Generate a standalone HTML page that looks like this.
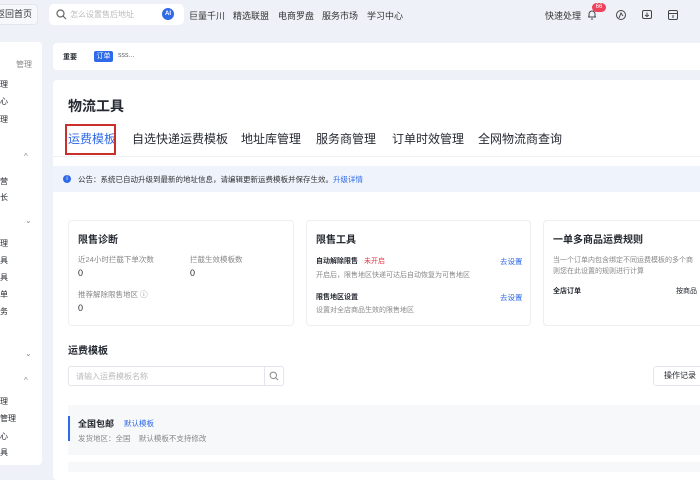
<!DOCTYPE html>
<html><head><meta charset="utf-8">
<style>
*{margin:0;padding:0;box-sizing:border-box}
body{width:700px;height:470px;overflow:hidden;background:#eef1f7;font-family:"Liberation Sans","Noto Sans CJK SC",sans-serif;color:#252931;position:relative}
.a{position:absolute;white-space:nowrap}
.s8{font-size:8px}.s9{font-size:9px}.s10{font-size:10px}
.g{color:#888}
.blue{color:#2f6ae8}
.card{position:absolute;background:#fff;border:1px solid #eceef2;border-radius:4px}
</style></head><body>
<div class="a" style="left:-9px;top:4px;width:47px;height:21px;background:#f7f8fb;border:1px solid #e3e6ec;border-radius:4px;font-size:9px;line-height:19px;padding-left:4px;color:#333">返回首页</div>
<div class="a" style="left:49px;top:4px;width:135px;height:21px;background:#fff;border-radius:5px"></div>
<svg class="a" style="left:56px;top:9px" width="11" height="11" viewBox="0 0 11 11"><circle cx="4.5" cy="4.5" r="3.5" fill="none" stroke="#666" stroke-width="1.2"/><path d="M7 7l3 3" stroke="#666" stroke-width="1.2"/></svg>
<div class="a s8" style="left:70px;top:9px;color:#bbb">怎么设置售后地址</div>
<div class="a" style="left:162px;top:8px;width:12px;height:12px;border-radius:50%;background:#2f6ae8;color:#fff;font-size:6px;line-height:12px;text-align:center;font-weight:bold">AI</div>
<div class="a s9" style="left:189px;top:9px;color:#333">巨量千川</div>
<div class="a s9" style="left:233px;top:9px;color:#333">精选联盟</div>
<div class="a s9" style="left:278px;top:9px;color:#333">电商罗盘</div>
<div class="a s9" style="left:322px;top:9px;color:#333">服务市场</div>
<div class="a s9" style="left:367px;top:9px;color:#333">学习中心</div>
<div class="a s9" style="left:545px;top:9px;color:#333">快速处理</div>
<svg class="a" style="left:586px;top:8px" width="12" height="12" viewBox="0 0 12 12"><path d="M3 9V6a3 3 0 016 0v3M2 9h8M5 11h2" fill="none" stroke="#444" stroke-width="1"/></svg>
<div class="a" style="left:592px;top:3px;width:14px;height:9px;border-radius:5px;background:#f0415a;color:#fff;font-size:6px;line-height:9px;text-align:center">66</div>
<svg class="a" style="left:615px;top:9px" width="12" height="12" viewBox="0 0 12 12"><circle cx="6" cy="6" r="4.5" fill="none" stroke="#444"/><path d="M4 9l2-5 2 3" fill="none" stroke="#444"/></svg>
<svg class="a" style="left:641px;top:9px" width="12" height="12" viewBox="0 0 12 12"><rect x="1.5" y="1.5" width="9" height="8" rx="1.5" fill="none" stroke="#444"/><path d="M6 3.5v4M4 6l2 1.5L8 6" fill="none" stroke="#444"/></svg>
<svg class="a" style="left:667px;top:9px" width="12" height="12" viewBox="0 0 12 12"><rect x="1.5" y="1.5" width="9" height="9" rx="1.5" fill="none" stroke="#444"/><path d="M1.5 4.5h9M6 6v3" fill="none" stroke="#444"/></svg>
<div class="a" style="left:0;top:42px;width:42px;height:423px;background:#fff;border-radius:0 4px 4px 0"></div>
<div class="a s8 g" style="left:16px;top:59px">管理</div>
<div class="a s8" style="left:0;top:79px">理</div>
<div class="a s8" style="left:0;top:96px">心</div>
<div class="a s8" style="left:0;top:114px">理</div>
<div class="a s8 g" style="left:24px;top:152px">^</div>
<div class="a s8" style="left:0;top:176px">营</div>
<div class="a s8" style="left:0;top:192px">长</div>
<div class="a s8 g" style="left:25px;top:216px">⌄</div>
<div class="a s8" style="left:0;top:238px">理</div>
<div class="a s8" style="left:0;top:255px">具</div>
<div class="a s8" style="left:0;top:272px">具</div>
<div class="a s8" style="left:0;top:289px">单</div>
<div class="a s8" style="left:0;top:306px">务</div>
<div class="a s8 g" style="left:25px;top:349px">⌄</div>
<div class="a s8 g" style="left:24px;top:376px">^</div>
<div class="a s8" style="left:0;top:396px">理</div>
<div class="a s8" style="left:0;top:413px">管理</div>
<div class="a s8" style="left:0;top:431px">心</div>
<div class="a s8" style="left:0;top:447px">具</div>
<div class="a" style="left:53px;top:43px;width:660px;height:27px;background:#fff;border-radius:4px"></div>
<div class="a" style="left:63px;top:52px;font-size:7px;font-weight:bold">重要</div>
<div class="a" style="left:94px;top:51px;width:19px;height:11px;background:#2f6ae8;color:#fff;font-size:7px;line-height:11px;text-align:center;border-radius:2px">订单</div>
<div class="a" style="left:118px;top:52px;font-size:7px;color:#666">sss...</div>
<div class="a" style="left:53px;top:80px;width:660px;height:400px;background:#fff;border-radius:4px"></div>
<div class="a" style="left:68px;top:96px;font-size:14px;font-weight:bold">物流工具</div>
<div class="a" style="left:68px;top:130px;font-size:12px;color:#2f6ae8">运费模板</div>
<div class="a" style="left:65px;top:124px;width:51px;height:31px;border:2px solid #c9302c"></div>
<div class="a" style="left:132px;top:130px;font-size:12px">自选快递运费模板</div>
<div class="a" style="left:241px;top:130px;font-size:12px">地址库管理</div>
<div class="a" style="left:316px;top:130px;font-size:12px">服务商管理</div>
<div class="a" style="left:392px;top:130px;font-size:12px">订单时效管理</div>
<div class="a" style="left:478px;top:130px;font-size:12px">全网物流商查询</div>
<div class="a" style="left:53px;top:156px;width:660px;height:1px;background:#eef0f4"></div>
<div class="a" style="left:53px;top:166px;width:660px;height:26px;background:#eef3fc"></div>
<div class="a" style="left:63px;top:175px;width:8px;height:8px;border-radius:50%;background:#2f6ae8;color:#fff;font-size:6px;line-height:8px;text-align:center">i</div>
<div class="a" style="left:78px;top:174px;font-size:7.5px;color:#333">公告：系统已自动升级到最新的地址信息，请编辑更新运费模板并保存生效。<span class="blue">升级详情</span></div>
<div class="card" style="left:68px;top:220px;width:226px;height:106px"></div>
<div class="a" style="left:78px;top:231px;font-size:10px;font-weight:bold">限售诊断</div>
<div class="a g" style="left:78px;top:254px;font-size:7.5px">近24小时拦截下单次数</div>
<div class="a g" style="left:190px;top:254px;font-size:7.5px">拦截生效模板数</div>
<div class="a s9" style="left:78px;top:268px">0</div>
<div class="a s9" style="left:190px;top:268px">0</div>
<div class="a g" style="left:78px;top:289px;font-size:7.5px">推荐解除限售地区 ⓘ</div>
<div class="a s9" style="left:78px;top:303px">0</div>
<div class="card" style="left:306px;top:220px;width:225px;height:106px"></div>
<div class="a" style="left:316px;top:231px;font-size:10px;font-weight:bold">限售工具</div>
<div class="a" style="left:316px;top:256px;font-size:7px;font-weight:bold">自动解除限售 <span style="color:#e8374a;font-weight:normal;margin-left:4px">未开启</span></div>
<div class="a blue" style="left:500px;top:256px;font-size:7.5px">去设置</div>
<div class="a g" style="left:316px;top:270px;font-size:7px">开启后，限售地区快递可达后自动恢复为可售地区</div>
<div class="a" style="left:316px;top:292px;font-size:7px;font-weight:bold">限售地区设置</div>
<div class="a blue" style="left:500px;top:292px;font-size:7.5px">去设置</div>
<div class="a g" style="left:316px;top:305px;font-size:7px">设置对全店商品生效的限售地区</div>
<div class="card" style="left:543px;top:220px;width:180px;height:106px"></div>
<div class="a" style="left:553px;top:231px;font-size:10px;font-weight:bold">一单多商品运费规则</div>
<div class="a g" style="left:553px;top:255px;font-size:7px;line-height:11px">当一个订单内包含绑定不同运费模板的多个商<br>则您在此设置的规则进行计算</div>
<div class="a" style="left:553px;top:286px;font-size:7px;font-weight:bold">全店订单</div>
<div class="a" style="left:676px;top:286px;font-size:7px">按商品</div>
<div class="a" style="left:68px;top:342px;font-size:10px;font-weight:bold">运费模板</div>
<div class="a" style="left:68px;top:366px;width:216px;height:20px;border:1px solid #e3e6ec;border-radius:3px"></div>
<div class="a" style="left:264px;top:366px;width:1px;height:20px;background:#e3e6ec"></div>
<div class="a" style="left:76px;top:371px;font-size:8px;color:#bbb">请输入运费模板名称</div>
<svg class="a" style="left:269px;top:371px" width="10" height="10" viewBox="0 0 10 10"><circle cx="4.3" cy="4.3" r="3.2" fill="none" stroke="#888"/><path d="M6.7 6.7l2.3 2.3" stroke="#888"/></svg>
<div class="a" style="left:653px;top:366px;width:60px;height:20px;border:1px solid #e3e6ec;border-radius:3px;font-size:8px;line-height:18px;padding-left:10px">操作记录</div>
<div class="a" style="left:68px;top:405px;width:645px;height:50px;background:#f7f8fa"></div>
<div class="a" style="left:68px;top:416px;width:2px;height:25px;background:#2f6ae8"></div>
<div class="a" style="left:78px;top:417px;font-size:9px;font-weight:bold">全国包邮</div>
<div class="a blue" style="left:124px;top:418px;font-size:7.5px">默认模板</div>
<div class="a g" style="left:78px;top:433px;font-size:7.5px">发货地区：全国 &nbsp;&nbsp; 默认模板不支持修改</div>
<div class="a" style="left:68px;top:462px;width:645px;height:10px;background:#f7f8fa"></div>
</body></html>
